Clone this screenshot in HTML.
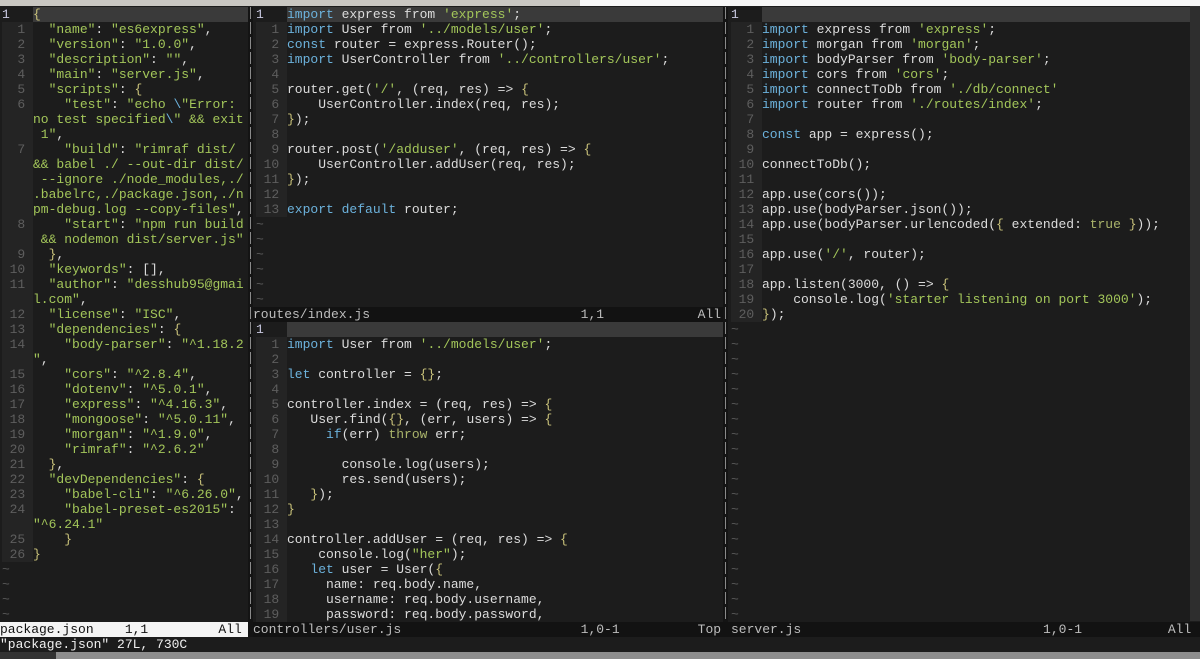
<!DOCTYPE html>
<html><head><meta charset="utf-8">
<style>
html,body{margin:0;padding:0}
body{width:1200px;height:659px;overflow:hidden;background:#1c1c1c;position:relative;font-family:"Liberation Mono",monospace;font-size:13px;color:#dcdcdc}
.top1{position:absolute;left:0;top:0;width:580px;height:6px;background:#c9c7c2}
.top2{position:absolute;left:580px;top:0;width:620px;height:6px;background:#f7f7f7}
.pane{position:absolute;top:7px;overflow:hidden}
.r{height:15px;line-height:15px;white-space:pre;position:relative}
.n{display:inline-block;width:31px;color:#5e5e5e;background:#242424;text-align:right}
.nh{display:inline-block;width:31px;color:#c8c8e0;text-align:left}
.cl{position:absolute;left:31px;right:0;top:0;bottom:0;background:#3a3a3a}
.t{color:#5a5a5a}
.k{color:#6cb2dc}
.s{color:#a3c65a}
.b{color:#c9c27a}
.o{color:#a9b36a}
.sep{position:absolute;top:7px;width:5px;height:630px;background:#141414}
.sep::after{content:"";position:absolute;left:2px;top:0;bottom:15px;width:1px;background:repeating-linear-gradient(#8a8a8a 0 12px,transparent 12px 15px)}
.st{position:absolute;height:15px;line-height:15px;white-space:pre;background:#121212;color:#bdbdbd}
.stA{background:#f4f4f4;color:#111}
.cmd{position:absolute;left:0;top:637px;height:15px;line-height:15px;white-space:pre;color:#f0f0f0}
.bot{position:absolute;left:0;top:652px;width:1200px;height:7px;background:#8d8d8d}
.botd{position:absolute;left:0;top:652px;width:56px;height:7px;background:#333}
.rs{position:absolute;left:1190px;top:6px;width:10px;height:615px;background:#2e2e2e}
</style></head><body>
<div class="top1"></div><div class="top2"></div>
<div class="rs"></div>

<!-- LEFT PANE -->
<div class="pane" style="left:2px;width:246px;height:615px">
<div class="r"><span class="nh">1</span><span class="cl"><span class="b">{</span></span></div>
<div class="r"><span class="n">1 </span>  <span class="s">"name"</span>: <span class="s">"es6express"</span>,</div>
<div class="r"><span class="n">2 </span>  <span class="s">"version"</span>: <span class="s">"1.0.0"</span>,</div>
<div class="r"><span class="n">3 </span>  <span class="s">"description"</span>: <span class="s">""</span>,</div>
<div class="r"><span class="n">4 </span>  <span class="s">"main"</span>: <span class="s">"server.js"</span>,</div>
<div class="r"><span class="n">5 </span>  <span class="s">"scripts"</span>: <span class="b">{</span></div>
<div class="r"><span class="n">6 </span>    <span class="s">"test"</span>: <span class="s">"echo </span><span class="k">\</span><span class="s">"Error: </span></div>
<div class="r"><span class="n"> </span><span class="s">no test specified</span><span class="k">\</span><span class="s">" &amp;&amp; exit</span></div>
<div class="r"><span class="n"> </span><span class="s"> 1"</span>,</div>
<div class="r"><span class="n">7 </span>    <span class="s">"build"</span>: <span class="s">"rimraf dist/ </span></div>
<div class="r"><span class="n"> </span><span class="s">&amp;&amp; babel ./ --out-dir dist/</span></div>
<div class="r"><span class="n"> </span><span class="s"> --ignore ./node_modules,./</span></div>
<div class="r"><span class="n"> </span><span class="s">.babelrc,./package.json,./n</span></div>
<div class="r"><span class="n"> </span><span class="s">pm-debug.log --copy-files"</span>,</div>
<div class="r"><span class="n">8 </span>    <span class="s">"start"</span>: <span class="s">"npm run build</span></div>
<div class="r"><span class="n"> </span><span class="s"> &amp;&amp; nodemon dist/server.js"</span></div>
<div class="r"><span class="n">9 </span>  <span class="b">}</span>,</div>
<div class="r"><span class="n">10 </span>  <span class="s">"keywords"</span>: [],</div>
<div class="r"><span class="n">11 </span>  <span class="s">"author"</span>: <span class="s">"desshub95@gmai</span></div>
<div class="r"><span class="n"> </span><span class="s">l.com"</span>,</div>
<div class="r"><span class="n">12 </span>  <span class="s">"license"</span>: <span class="s">"ISC"</span>,</div>
<div class="r"><span class="n">13 </span>  <span class="s">"dependencies"</span>: <span class="b">{</span></div>
<div class="r"><span class="n">14 </span>    <span class="s">"body-parser"</span>: <span class="s">"^1.18.2</span></div>
<div class="r"><span class="n"> </span><span class="s">"</span>,</div>
<div class="r"><span class="n">15 </span>    <span class="s">"cors"</span>: <span class="s">"^2.8.4"</span>,</div>
<div class="r"><span class="n">16 </span>    <span class="s">"dotenv"</span>: <span class="s">"^5.0.1"</span>,</div>
<div class="r"><span class="n">17 </span>    <span class="s">"express"</span>: <span class="s">"^4.16.3"</span>,</div>
<div class="r"><span class="n">18 </span>    <span class="s">"mongoose"</span>: <span class="s">"^5.0.11"</span>,</div>
<div class="r"><span class="n">19 </span>    <span class="s">"morgan"</span>: <span class="s">"^1.9.0"</span>,</div>
<div class="r"><span class="n">20 </span>    <span class="s">"rimraf"</span>: <span class="s">"^2.6.2"</span></div>
<div class="r"><span class="n">21 </span>  <span class="b">}</span>,</div>
<div class="r"><span class="n">22 </span>  <span class="s">"devDependencies"</span>: <span class="b">{</span></div>
<div class="r"><span class="n">23 </span>    <span class="s">"babel-cli"</span>: <span class="s">"^6.26.0"</span>,</div>
<div class="r"><span class="n">24 </span>    <span class="s">"babel-preset-es2015"</span>:</div>
<div class="r"><span class="n"> </span><span class="s">"^6.24.1"</span></div>
<div class="r"><span class="n">25 </span>    <span class="b">}</span></div>
<div class="r"><span class="n">26 </span><span class="b">}</span></div>
<div class="r t">~</div><div class="r t">~</div><div class="r t">~</div><div class="r t">~</div>
</div>

<div class="sep" style="left:248px"></div>

<!-- MIDDLE TOP -->
<div class="pane" style="left:256px;width:467px;height:300px">
<div class="r"><span class="nh">1</span><span class="cl"><span class="k">import</span> express from <span class="s">'express'</span>;</span></div>
<div class="r"><span class="n">1 </span><span class="k">import</span> User from <span class="s">'../models/user'</span>;</div>
<div class="r"><span class="n">2 </span><span class="k">const</span> router = express.Router();</div>
<div class="r"><span class="n">3 </span><span class="k">import</span> UserController from <span class="s">'../controllers/user'</span>;</div>
<div class="r"><span class="n">4 </span></div>
<div class="r"><span class="n">5 </span>router.get(<span class="s">'/'</span>, (req, res) =&gt; <span class="b">{</span></div>
<div class="r"><span class="n">6 </span>    UserController.index(req, res);</div>
<div class="r"><span class="n">7 </span><span class="b">}</span>);</div>
<div class="r"><span class="n">8 </span></div>
<div class="r"><span class="n">9 </span>router.post(<span class="s">'/adduser'</span>, (req, res) =&gt; <span class="b">{</span></div>
<div class="r"><span class="n">10 </span>    UserController.addUser(req, res);</div>
<div class="r"><span class="n">11 </span><span class="b">}</span>);</div>
<div class="r"><span class="n">12 </span></div>
<div class="r"><span class="n">13 </span><span class="k">export</span> <span class="k">default</span> router;</div>
<div class="r t">~</div><div class="r t">~</div><div class="r t">~</div><div class="r t">~</div><div class="r t">~</div><div class="r t">~</div>
</div>
<div class="st" style="left:253px;top:307px;width:470px">routes/index.js                           1,1            All</div>

<!-- MIDDLE BOTTOM -->
<div class="pane" style="left:256px;top:322px;width:467px;height:300px">
<div class="r"><span class="nh">1</span><span class="cl"></span></div>
<div class="r"><span class="n">1 </span><span class="k">import</span> User from <span class="s">'../models/user'</span>;</div>
<div class="r"><span class="n">2 </span></div>
<div class="r"><span class="n">3 </span><span class="k">let</span> controller = <span class="b">{}</span>;</div>
<div class="r"><span class="n">4 </span></div>
<div class="r"><span class="n">5 </span>controller.index = (req, res) =&gt; <span class="b">{</span></div>
<div class="r"><span class="n">6 </span>   User.find(<span class="b">{}</span>, (err, users) =&gt; <span class="b">{</span></div>
<div class="r"><span class="n">7 </span>     <span class="k">if</span>(err) <span class="o">throw</span> err;</div>
<div class="r"><span class="n">8 </span></div>
<div class="r"><span class="n">9 </span>       console.log(users);</div>
<div class="r"><span class="n">10 </span>       res.send(users);</div>
<div class="r"><span class="n">11 </span>   <span class="b">}</span>);</div>
<div class="r"><span class="n">12 </span><span class="b">}</span></div>
<div class="r"><span class="n">13 </span></div>
<div class="r"><span class="n">14 </span>controller.addUser = (req, res) =&gt; <span class="b">{</span></div>
<div class="r"><span class="n">15 </span>    console.log(<span class="s">"her"</span>);</div>
<div class="r"><span class="n">16 </span>   <span class="k">let</span> user = User(<span class="b">{</span></div>
<div class="r"><span class="n">17 </span>     name: req.body.name,</div>
<div class="r"><span class="n">18 </span>     username: req.body.username,</div>
<div class="r"><span class="n">19 </span>     password: req.body.password,</div>
</div>

<div class="sep" style="left:723px"></div>

<!-- RIGHT PANE -->
<div class="pane" style="left:731px;width:459px;height:615px">
<div class="r"><span class="nh">1</span><span class="cl"></span></div>
<div class="r"><span class="n">1 </span><span class="k">import</span> express from <span class="s">'express'</span>;</div>
<div class="r"><span class="n">2 </span><span class="k">import</span> morgan from <span class="s">'morgan'</span>;</div>
<div class="r"><span class="n">3 </span><span class="k">import</span> bodyParser from <span class="s">'body-parser'</span>;</div>
<div class="r"><span class="n">4 </span><span class="k">import</span> cors from <span class="s">'cors'</span>;</div>
<div class="r"><span class="n">5 </span><span class="k">import</span> connectToDb from <span class="s">'./db/connect'</span></div>
<div class="r"><span class="n">6 </span><span class="k">import</span> router from <span class="s">'./routes/index'</span>;</div>
<div class="r"><span class="n">7 </span></div>
<div class="r"><span class="n">8 </span><span class="k">const</span> app = express();</div>
<div class="r"><span class="n">9 </span></div>
<div class="r"><span class="n">10 </span>connectToDb();</div>
<div class="r"><span class="n">11 </span></div>
<div class="r"><span class="n">12 </span>app.use(cors());</div>
<div class="r"><span class="n">13 </span>app.use(bodyParser.json());</div>
<div class="r"><span class="n">14 </span>app.use(bodyParser.urlencoded(<span class="b">{</span> extended: <span class="o">true</span> <span class="b">}</span>));</div>
<div class="r"><span class="n">15 </span></div>
<div class="r"><span class="n">16 </span>app.use(<span class="s">'/'</span>, router);</div>
<div class="r"><span class="n">17 </span></div>
<div class="r"><span class="n">18 </span>app.listen(3000, () =&gt; <span class="b">{</span></div>
<div class="r"><span class="n">19 </span>    console.log(<span class="s">'starter listening on port 3000'</span>);</div>
<div class="r"><span class="n">20 </span><span class="b">}</span>);</div>
<div class="r t">~</div><div class="r t">~</div><div class="r t">~</div><div class="r t">~</div><div class="r t">~</div>
<div class="r t">~</div><div class="r t">~</div><div class="r t">~</div><div class="r t">~</div><div class="r t">~</div>
<div class="r t">~</div><div class="r t">~</div><div class="r t">~</div><div class="r t">~</div><div class="r t">~</div>
<div class="r t">~</div><div class="r t">~</div><div class="r t">~</div><div class="r t">~</div><div class="r t">~</div>
</div>

<!-- STATUS LINES -->
<div class="st stA" style="left:0;top:622px;width:248px;overflow:hidden">package.json    1,1         All</div>
<div class="st" style="left:253px;top:622px;width:475px">controllers/user.js                       1,0-1          Top</div>
<div class="st" style="left:728px;top:622px;width:469px;padding-left:3px">server.js                               1,0-1           All</div>

<div class="cmd">"package.json" 27L, 730C</div>
<div class="bot"></div><div class="botd"></div>
</body></html>
